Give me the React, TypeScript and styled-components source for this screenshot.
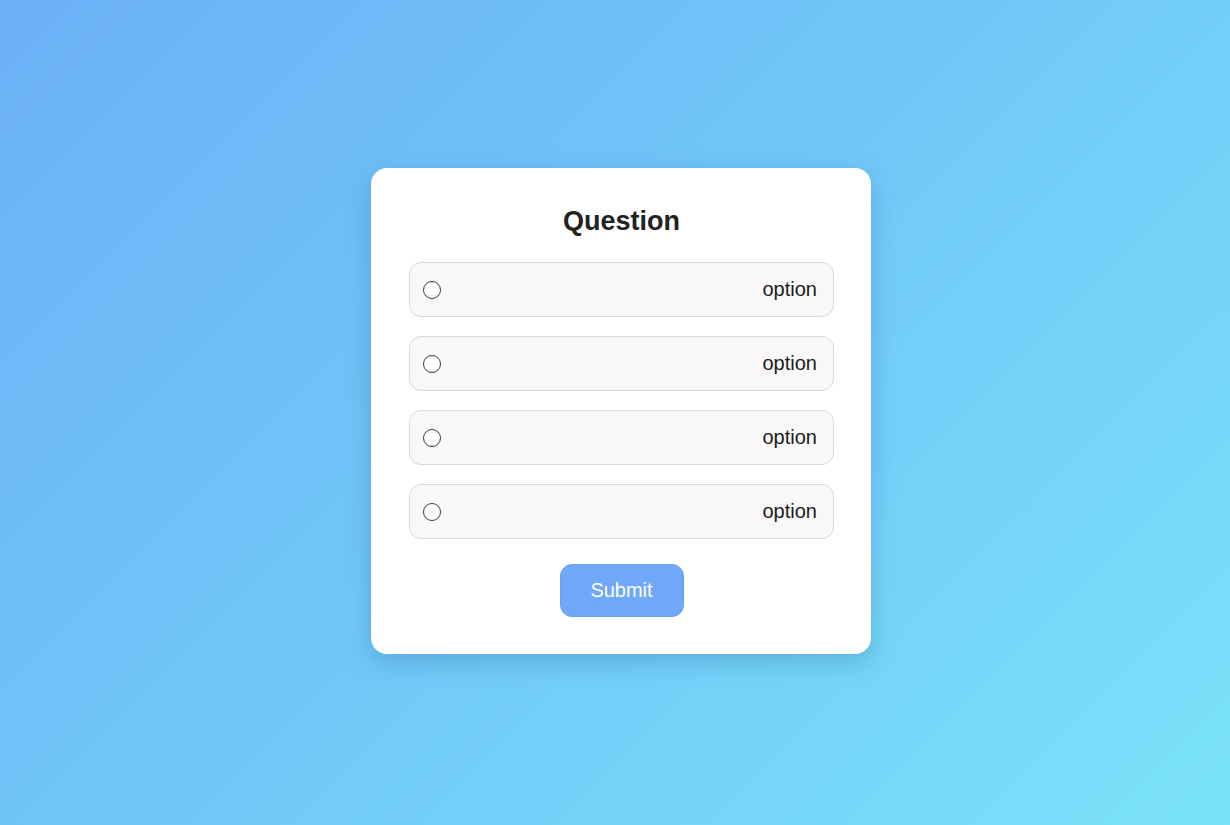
import styled, { createGlobalStyle } from "styled-components"

const GlobalStyle = createGlobalStyle`
	html, body {
		margin: 0;
		padding: 0;
		height: 100%;
	}
	body {
		font-family: "Liberation Sans", Arial, sans-serif;
		background: linear-gradient(135deg, #6cb0f6 0%, #71c8f8 50%, #7ae3f9 100%);
		min-height: 825px;
	}
	#root {
		height: 100%;
	}
`

const OPTIONS = ["option", "option", "option", "option"]

const App = () => {
	return (
		<>
			<GlobalStyle />
			<Page>
				<Card>
					<Title>Question</Title>
					<OptionList>
						{OPTIONS.map((text, i) => (
							<OptionRow key={i}>
								<Radio type="radio" name="answer" />
								<OptionText>{text}</OptionText>
							</OptionRow>
						))}
					</OptionList>
					<SubmitButton type="button">Submit</SubmitButton>
				</Card>
			</Page>
		</>
	)
}

export default App

const Page = styled.div`
	display: flex;
	align-items: center;
	justify-content: center;
	height: 825px;
	padding: 0 0 3px 12px;
	box-sizing: border-box;
`

const Card = styled.div`
	display: flex;
	flex-direction: column;
	align-items: center;
	width: 500px;
	box-sizing: border-box;
	padding: 38px 37px 37px 38px;
	background: #ffffff;
	border-radius: 16px;
	box-shadow: 0 8px 24px rgba(30, 90, 140, 0.28);
`

const Title = styled.h2`
	margin: 0 0 25px;
	font-size: 27px;
	line-height: 31px;
	font-weight: 700;
	color: #222222;
`

const OptionList = styled.div`
	display: flex;
	flex-direction: column;
	gap: 19px;
	width: 100%;
	margin-bottom: 25px;
`

const OptionRow = styled.label`
	display: flex;
	align-items: center;
	justify-content: space-between;
	height: 55px;
	box-sizing: border-box;
	padding: 0 16px 0 13px;
	background: #f9f7f8;
	border: 1px solid #dcd8da;
	border-radius: 12px;
	cursor: pointer;
`

const Radio = styled.input`
	appearance: none;
	margin: 0;
	width: 18px;
	height: 18px;
	border: 1.5px solid #3a3a3a;
	border-radius: 50%;
	background: #ffffff;
	box-sizing: border-box;
`

const OptionText = styled.span`
	font-size: 20px;
	color: #1c1c1c;
`

const SubmitButton = styled.button`
	width: 124px;
	height: 53px;
	border: 1px solid #69a4f4;
	border-radius: 12px;
	background: #6ea8f7;
	color: #ffffff;
	font-family: "Liberation Sans", Arial, sans-serif;
	font-size: 20px;
	cursor: pointer;
`
